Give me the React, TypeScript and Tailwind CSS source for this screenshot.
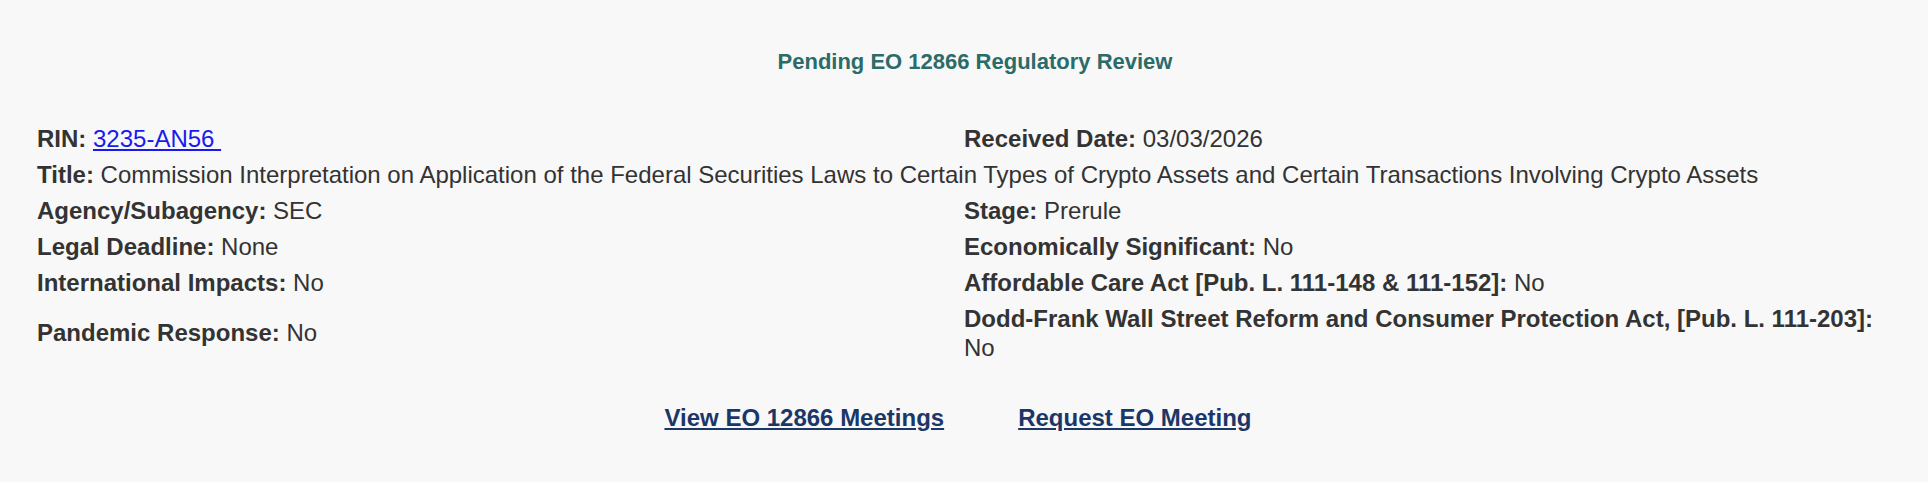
export default function App() {
  const cell = 'py-[3.5px] align-middle';
  return (
    <div className="min-h-[482px] bg-[#f8f8f8] text-[#333333] font-['Liberation_Sans',Arial,sans-serif] text-[24px] leading-[29px]">
      <div className="px-[37px] pt-[47px]">
        <h2 className="pl-[22px] text-center font-bold text-[22px] leading-[29px] text-[#2b6b69]">
          Pending EO 12866 Regulatory Review
        </h2>
        <table className="mt-[44px] w-full table-fixed border-collapse">
          <tbody>
            <tr>
              <td className={cell}>
                <b>RIN:</b>{' '}
                <a href="#" className="text-[#1a1aee] underline">3235-AN56&nbsp;</a>
              </td>
              <td className={cell}>
                <b>Received Date:</b> 03/03/2026
              </td>
            </tr>
            <tr>
              <td colSpan={2} className={cell}>
                <b>Title:</b> Commission Interpretation on Application of the Federal Securities Laws to Certain Types of Crypto Assets and Certain Transactions Involving Crypto Assets
              </td>
            </tr>
            <tr>
              <td className={cell}>
                <b>Agency/Subagency:</b> SEC
              </td>
              <td className={cell}>
                <b>Stage:</b> Prerule
              </td>
            </tr>
            <tr>
              <td className={cell}>
                <b>Legal Deadline:</b> None
              </td>
              <td className={cell}>
                <b>Economically Significant:</b> No
              </td>
            </tr>
            <tr>
              <td className={cell}>
                <b>International Impacts:</b> No
              </td>
              <td className={cell}>
                <b>Affordable Care Act [Pub. L. 111-148 &amp; 111-152]:</b> No
              </td>
            </tr>
            <tr>
              <td className={cell}>
                <b>Pandemic Response:</b> No
              </td>
              <td className={cell}>
                <b>Dodd-Frank Wall Street Reform and Consumer Protection Act, [Pub. L. 111-203]:</b> No
              </td>
            </tr>
          </tbody>
        </table>
        <div className="mt-[38px] flex justify-center gap-[74px] pr-[12px] font-bold text-[#1b3768]">
          <a href="#" className="underline">View EO 12866 Meetings</a>
          <a href="#" className="underline">Request EO Meeting</a>
        </div>
      </div>
    </div>
  );
}
